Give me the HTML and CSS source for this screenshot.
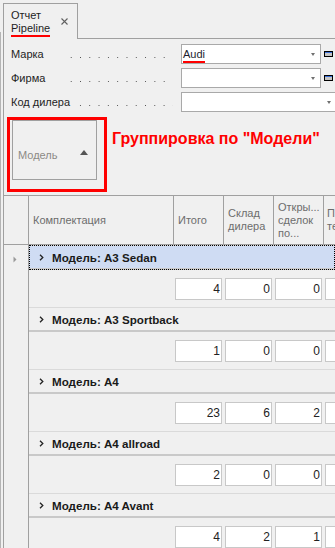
FILE: index.html
```html
<!DOCTYPE html>
<html lang="ru">
<head>
<meta charset="utf-8">
<title>Отчет Pipeline</title>
<link rel="stylesheet" href="styles.css">
</head>
<body>
<div class="tabstrip">
  <div class="tab">
    <div class="tab-title"><span>Отчет</span><span class="mark">Pipeline</span></div>
    <svg class="close" width="7" height="7" viewBox="0 0 7 7"><path d="M0.5 0.5L6.5 6.5M6.5 0.5L0.5 6.5" stroke="#606060" stroke-width="1.1" fill="none"/></svg>
  </div>
  <div class="tab-rest"></div>
</div>
<div class="panel">
  <div class="form">
    <div class="frow">
      <div class="lead"><span class="flabel">Марка</span><span class="dots"></span></div>
      <div class="combo"><span class="val"><span class="mark">Audi</span></span><i class="arrow"></i></div>
      <svg class="btn" width="9" height="6" viewBox="0 0 9 6"><rect x="0.5" y="0.5" width="8" height="5" fill="#c4c4c4" stroke="#000"/><line x1="1" y1="1.5" x2="8" y2="1.5" stroke="#3a6fd8"/></svg>
    </div>
    <div class="frow">
      <div class="lead"><span class="flabel">Фирма</span><span class="dots"></span></div>
      <div class="combo"><span class="val"></span><i class="arrow"></i></div>
      <svg class="btn" width="9" height="6" viewBox="0 0 9 6"><rect x="0.5" y="0.5" width="8" height="5" fill="#c4c4c4" stroke="#000"/><line x1="1" y1="1.5" x2="8" y2="1.5" stroke="#3a6fd8"/></svg>
    </div>
    <div class="frow">
      <div class="lead"><span class="flabel">Код дилера</span><span class="dots"></span></div>
      <div class="combo wide"><span class="val"></span><i class="arrow"></i></div>
    </div>
  </div>

  <div class="grouppanel">
    <div class="gcol"><span>Модель</span><i class="sort-up"></i></div>
    <div class="annot-box"></div>
    <div class="annot-text">Группировка по "Модели"</div>
  </div>

  <div class="grid">
    <div class="ghead">
      <div class="hc ind"></div>
      <div class="hc">Комплектация</div>
      <div class="hc">Итого</div>
      <div class="hc">Склад<br>дилера</div>
      <div class="hc">Откры...<br>сделок<br>по...</div>
      <div class="hc last">Пр...<br>тест...</div>
    </div>

    <div class="grp">
      <div class="ind-col"><svg class="rowind" width="4" height="7" viewBox="0 0 4 7"><path d="M0.5 0.5L3.5 3.5L0.5 6.5Z" fill="#9a9a9a"/></svg></div>
      <div class="grp-main">
        <div class="ghdr focus"><svg class="chev" width="5" height="7" viewBox="0 0 5 7"><path d="M1 0.8L3.8 3.5L1 6.2" stroke="#222" stroke-width="1.3" fill="none"/></svg><span>Модель: A3 Sedan</span></div>
        <div class="gdata"><span class="cell">4</span><span class="cell">0</span><span class="cell">0</span><span class="cell"></span></div>
      </div>
    </div>

    <div class="grp">
      <div class="ind-col"></div>
      <div class="grp-main">
        <div class="ghdr"><svg class="chev" width="5" height="7" viewBox="0 0 5 7"><path d="M1 0.8L3.8 3.5L1 6.2" stroke="#222" stroke-width="1.3" fill="none"/></svg><span>Модель: A3 Sportback</span></div>
        <div class="gdata"><span class="cell">1</span><span class="cell">0</span><span class="cell">0</span><span class="cell"></span></div>
      </div>
    </div>

    <div class="grp">
      <div class="ind-col"></div>
      <div class="grp-main">
        <div class="ghdr"><svg class="chev" width="5" height="7" viewBox="0 0 5 7"><path d="M1 0.8L3.8 3.5L1 6.2" stroke="#222" stroke-width="1.3" fill="none"/></svg><span>Модель: A4</span></div>
        <div class="gdata"><span class="cell">23</span><span class="cell">6</span><span class="cell">2</span><span class="cell"></span></div>
      </div>
    </div>

    <div class="grp">
      <div class="ind-col"></div>
      <div class="grp-main">
        <div class="ghdr"><svg class="chev" width="5" height="7" viewBox="0 0 5 7"><path d="M1 0.8L3.8 3.5L1 6.2" stroke="#222" stroke-width="1.3" fill="none"/></svg><span>Модель: A4 allroad</span></div>
        <div class="gdata"><span class="cell">2</span><span class="cell">0</span><span class="cell">0</span><span class="cell"></span></div>
      </div>
    </div>

    <div class="grp">
      <div class="ind-col"></div>
      <div class="grp-main">
        <div class="ghdr"><svg class="chev" width="5" height="7" viewBox="0 0 5 7"><path d="M1 0.8L3.8 3.5L1 6.2" stroke="#222" stroke-width="1.3" fill="none"/></svg><span>Модель: A4 Avant</span></div>
        <div class="gdata"><span class="cell">4</span><span class="cell">2</span><span class="cell">1</span><span class="cell"></span></div>
      </div>
    </div>
  </div>
</div>
</body>
</html>
```
FILE: styles.css
```css
html, body {
  margin: 0;
  padding: 0;
}
body {
  width: 335px;
  height: 548px;
  overflow: hidden;
  background: linear-gradient(#b4b4b4, #b4b4b4) no-repeat 0 32px / 1px 100%, #f0f0f0;
  font-family: "Liberation Sans", Arial, sans-serif;
  font-size: 11px;
  color: #1e1e1e;
}

/* tab strip */
.tabstrip {
  display: flex;
  align-items: flex-end;
  height: 39px;
}
.tab {
  margin-left: 3px;
  width: 75px;
  height: 36px;
  box-sizing: border-box;
  border: 1px solid #a0a0a0;
  border-bottom: none;
  display: flex;
  align-items: center;
  padding-left: 7px;
}
.tab-title {
  display: flex;
  flex-direction: column;
  line-height: 12.5px;
}
.close {
  margin-left: auto;
  margin-right: 9px;
}
.tab-rest {
  flex: 1;
  height: 39px;
  box-sizing: border-box;
  border-bottom: 1px solid #a0a0a0;
}
.mark {
  position: relative;
}
.mark::after {
  content: "";
  position: absolute;
  left: 0;
  right: 0;
  bottom: -3px;
  height: 2px;
  background: #f00;
}

/* panel */
.panel {
  margin-left: 3px;
  border-left: 1px solid #a0a0a0;
}

/* form */
.form {
  padding: 3px 0 0 7px;
}
.frow {
  display: flex;
  align-items: center;
  height: 24px;
}
.lead {
  flex: none;
  width: 162px;
  display: flex;
  align-items: center;
}
.flabel {
  min-width: 52px;
  padding-right: 0;
  white-space: nowrap;
}
.dots {
  flex: 1;
  height: 1px;
  margin-top: 7px;
  background-image: linear-gradient(to right, #505050 0 1px, transparent 1px);
  background-size: 9.3px 1px;
  background-position: right 0 top 0;
  background-repeat: repeat-x;
}
.frow:last-child .dots {
  margin-left: 5px;
}
.combo {
  flex: none;
  margin-left: 8px;
  width: 140px;
  height: 20px;
  box-sizing: border-box;
  border: 1px solid #a9a9a9;
  background: #fff;
  display: flex;
  align-items: center;
  padding-left: 1px;
}
.combo.wide {
  width: 156px;
}
.combo .val {
  flex: 1;
  color: #1e1e2e;
}
.arrow {
  margin-right: 5px;
  margin-top: 1px;
  width: 0;
  height: 0;
  border-left: 2.5px solid transparent;
  border-right: 2.5px solid transparent;
  border-top: 3px solid #707070;
}
.btn {
  margin-left: 3px;
  flex: none;
}

/* group panel */
.grouppanel {
  position: relative;
  height: 75px;
}
.gcol {
  margin: 6px 0 0 8px;
  width: 85px;
  height: 60px;
  box-sizing: border-box;
  border: 1px solid #a0a0a0;
  display: flex;
  align-items: center;
  padding: 10px 0 0 5px;
  color: #8c8a86;
}
.sort-up {
  margin-left: auto;
  margin-right: 8px;
  margin-top: -5px;
  width: 0;
  height: 0;
  border-left: 4.5px solid transparent;
  border-right: 4.5px solid transparent;
  border-bottom: 5px solid #555;
}
.annot-box {
  position: absolute;
  left: 3px;
  top: -3px;
  width: 100px;
  height: 75px;
  box-sizing: border-box;
  border: 3px solid #f00;
}
.annot-text {
  position: absolute;
  left: 108px;
  top: 10px;
  color: #f00;
  font-weight: bold;
  font-size: 16px;
  white-space: nowrap;
}

/* grid */
.ghead {
  display: grid;
  grid-template-columns: 25px 145px 50px 50px 50px 60px;
  height: 50px;
  box-sizing: border-box;
  border-top: 1px solid #a0a0a0;
  border-bottom: 1px solid #a0a0a0;
  color: #6d6d6d;
}
.hc {
  border-right: 1px solid #a0a0a0;
  display: flex;
  align-items: center;
  padding-left: 4px;
  line-height: 13px;
  overflow: hidden;
  white-space: nowrap;
}
.hc.ind {
  padding: 0;
}
.hc.last {
  border-right: none;
  padding-left: 3px;
}

.grp {
  display: flex;
}
.ind-col {
  flex: none;
  width: 25px;
  box-sizing: border-box;
  border-right: 1px solid #a0a0a0;
}
.rowind {
  display: block;
  margin: 11px 0 0 9px;
}
.grp-main {
  flex: 1;
  min-width: 0;
}
.ghdr {
  height: 25px;
  box-sizing: border-box;
  border-top: 1px solid #dadada;
  border-bottom: 2px solid #c9c9c9;
  display: flex;
  align-items: center;
  padding-left: 10px;
  gap: 8px;
  font-weight: bold;
  font-size: 11.6px;
  color: #1a1a1a;
  white-space: nowrap;
}
.ghdr.focus {
  background: #cfdcf3;
  outline: 1px dotted #000;
  outline-offset: -1px;
}
.chev {
  flex: none;
}
.gdata {
  height: 37px;
  box-sizing: border-box;
  padding: 8px 0 0 146px;
  display: flex;
  gap: 3px;
}
.cell {
  flex: none;
  width: 47px;
  height: 22px;
  box-sizing: border-box;
  border: 1px solid #c8c8c8;
  background: #fff;
  text-align: right;
  padding-right: 1px;
  line-height: 20px;
  font-size: 12px;
  color: #222;
}
```
